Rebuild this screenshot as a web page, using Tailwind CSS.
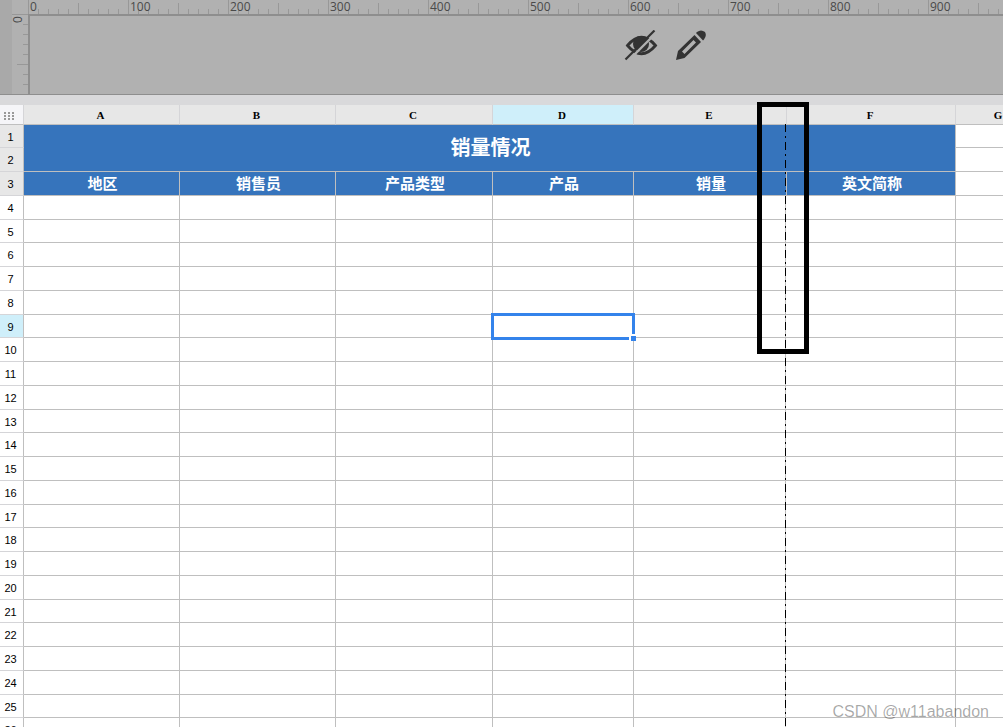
<!DOCTYPE html>
<html lang="zh-CN">
<head>
  <meta charset="UTF-8" />
  <meta name="viewport" content="width=device-width, initial-scale=1.0"/>
  <title>销量情况</title>
  <script src="https://cdn.jsdelivr.net/npm/@tailwindcss/browser@4"></script>
</head>
<body class="bg-white text-black font-['Liberation_Sans','Noto_Sans_CJK_SC',sans-serif]">
  <div class="relative flex flex-col h-screen overflow-hidden">

    <!-- Report header band with rulers -->
    <header class="flex shrink-0 h-[95px] bg-[#b1b1b1] border-b border-[#8e8e8e]">
      <div class="w-3 shrink-0 bg-[#a9a9a9]"></div>
      <div class="flex flex-col flex-1 min-w-0">
        <div class="h-[14px] shrink-0">
          <svg id="topRuler" class="block w-full h-[14px] overflow-visible font-['Open_Sans',sans-serif] text-[12px]" fill="#4a4a4a"></svg>
        </div>
        <div class="flex flex-1 min-h-0">
          <svg id="sideRuler" class="block w-4 h-full shrink-0 overflow-visible font-['Open_Sans',sans-serif] text-[12px]" fill="#4a4a4a"></svg>
          <div class="flex-1 flex justify-center items-start gap-4 pt-[14px] pl-[297px] border-l-2 border-t-2 border-[#8e8e8e]">
            <button aria-label="隐藏" class="w-9 h-8">
              <svg viewBox="0 0 36 32" class="w-9 h-8" fill="none" stroke="#333">
                <path d="M4.5 15.5Q18.5-1 32.5 15.5Q18.5 32 4.5 15.5Z" stroke-width="2.8"/>
                <circle cx="18" cy="14" r="8" fill="#333" stroke="none"/>
                <path d="M5 31L34 2" stroke="#b1b1b1" stroke-width="2.4"/>
                <path d="M2.5 29.5L31.5 .5" stroke-width="2.2"/>
              </svg>
            </button>
            <button aria-label="编辑" class="w-8 h-8">
              <svg viewBox="0 0 32 32" class="w-8 h-8" fill="#333">
                <path fill-rule="evenodd" d="M1 30L3 21L19.500 5L26 12L9.500 28ZM7 21.500L9.500 24L21 12.500L18.500 10Z"/>
                <path d="M22 2Q26-1 30 2Q32 6 29 9.500L28 10.500L21 3Z"/>
              </svg>
            </button>
          </div>
        </div>
      </div>
    </header>
    <div class="h-[10px] shrink-0 bg-[#d9d9db]"></div>

    <!-- Sheet -->
    <main class="relative flex-1 min-h-0 overflow-hidden">
      <table class="table-fixed w-[1043px] border-separate border-spacing-0 text-center">
        <colgroup>
          <col class="w-6"/><col class="w-[156px]"/><col class="w-[156px]"/><col class="w-[157px]"/><col class="w-[141px]"/><col class="w-[153px]"/><col class="w-[169px]"/><col class="w-[87px]"/>
        </colgroup>
        <thead class="font-['Liberation_Serif',serif] text-[11px] leading-[17px]">
          <tr class="h-5 *:p-0 *:pt-[2px] *:pr-[2px] *:border-r *:border-b *:border-r-[#d5d5d8] *:border-b-[#bfbfbf] *:bg-[#e7e7e7]">
            <td class="bg-[#f5f5f8]!">
              <svg class="block ml-1 w-[10px] h-2" viewBox="0 0 10 8" fill="#999">
                <path d="M0 0h2v2H0zM4 0h2v2H4zM8 0h2v2H8zM0 3h2v2H0zM4 3h2v2H4zM8 3h2v2H8zM0 6h2v2H0zM4 6h2v2H4zM8 6h2v2H8z"/>
              </svg>
            </td>
            <th>A</th><th>B</th><th>C</th><th class="bg-[#cfeffa]!">D</th><th>E</th><th>F</th><th>G</th>
          </tr>
        </thead>
        <tbody id="rows"></tbody>
      </table>

      <!-- Page break line -->
      <svg class="absolute left-[785px] top-[19px] w-px h-full">
        <path d="M.5 72V800" stroke="#bfbfbf"/>
        <path d="M.5 0V800" stroke="#000" stroke-dasharray="8 4 2 4"/>
      </svg>
      <!-- Selected cell -->
      <div class="absolute left-[491px] top-[208px] w-[144px] h-[27px] border-3 border-[#3483eb]">
        <span class="absolute -right-1 -bottom-1 size-[7px] border-l-2 border-t-2 border-white bg-[#3483eb]"></span>
      </div>
    </main>

    <div class="absolute left-[757px] top-[102px] w-[52px] h-[252px] border-5 border-black"></div>
    <div class="absolute right-[14px] bottom-[4px] text-[16px] leading-[22px] text-black/35 font-['Liberation_Sans',sans-serif]">CSDN @w11abandon</div>
  </div>

  <script>
    // Rulers: a tick every 10px, a number every 100px
    let ticks = '<path stroke="#989898" fill="none" d="M16.5 0V14';
    let labels = '';
    for (let i = 10; i < 1800; i += 10) {
      ticks += `M${16.5 + i} ${i % 100 === 0 ? 0 : i % 50 === 0 ? 3 : 9}V14`;
    }
    for (let i = 0; i < 1800; i += 100) {
      labels += `<text x="${18 + i}" y="11">${i}</text>`;
    }
    document.getElementById('topRuler').innerHTML = ticks + '"/>' + labels;

    let side = '<path stroke="#989898" fill="none" d="M0 .5H16';
    for (let i = 10; i < 80; i += 10) {
      side += `M${i % 50 === 0 ? 5 : 11} ${i + 0.5}H16`;
    }
    document.getElementById('sideRuler').innerHTML = side + '"/><text transform="translate(10 9) rotate(-90)">0</text>';

    // Sheet rows
    const heads = ['地区', '销售员', '产品类型', '产品', '销量', '英文简称'];
    const line = 'border-r border-b border-[#bfbfbf] p-0';
    let html = '';
    for (let r = 1; r <= 26; r++) {
      const numBg = r === 9 ? 'bg-[#cfeffa]' : r < 4 ? 'bg-[#e7e7e7]' : 'bg-white';
      html += `<tr class="${r % 4 === 1 ? 'h-[23px]' : 'h-6'}">`;
      html += `<th class="border-r border-b border-r-[#bfbfbf] border-b-[#d5d5d8] p-0 pt-px pr-[2px] font-normal text-[11px] leading-4 ${numBg}">${r}</th>`;
      if (r === 1) {
        html += `<td colspan="6" rowspan="2" class="${line} pl-[2px] bg-[#3674bc] text-white text-[20px] leading-6 font-bold">销量情况</td><td class="${line}"></td>`;
      } else if (r === 2) {
        html += `<td class="${line}"></td>`;
      } else {
        for (let c = 0; c < 7; c++) {
          if (r === 3 && c < 6) {
            html += `<td class="${line} pl-[2px] bg-[#3674bc] text-white text-[15px] leading-5 font-bold">${heads[c]}</td>`;
          } else if (c === 4) {
            // the page break line stands in for this column's edge
            html += '<td class="border-b border-[#bfbfbf] p-0"></td>';
          } else {
            html += `<td class="${line}"></td>`;
          }
        }
      }
      html += '</tr>';
    }
    document.getElementById('rows').innerHTML = html;
  </script>
</body>
</html>
